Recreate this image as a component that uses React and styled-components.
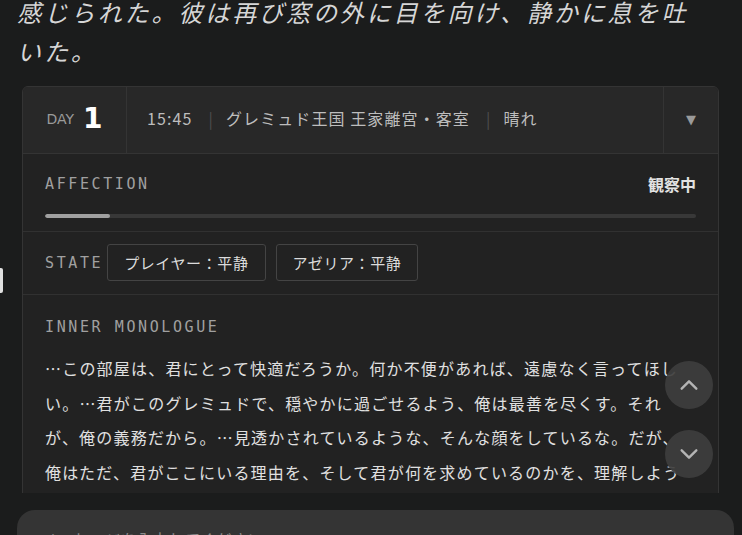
import React from "react"
import styled, { createGlobalStyle } from "styled-components"

const GlobalStyle = createGlobalStyle`
  html, body {
    margin: 0;
    padding: 0;
    background: #1b1c1c;
  }
  * { box-sizing: border-box; }
`

const jp = `"Noto Sans CJK JP", "DejaVu Sans", sans-serif`
const mono = `"DejaVu Sans Mono", "Liberation Mono", monospace`

const Page = styled.div`
  position: relative;
  height: 100vh;
  display: flex;
  flex-direction: column;
  overflow: hidden;
  font-family: ${jp};
`

const ScrollArea = styled.div`
  flex: 1;
  overflow: hidden;
  padding: 0 23px 0 17px;
`

const Story = styled.p`
  margin: -8px 0 16px;
  padding-right: 20px;
  font-size: 24px;
  line-height: 39px;
  letter-spacing: 2.9px;
  font-style: italic;
  color: #d6d6d6;
`

const Card = styled.div`
  margin-left: 5px;
  border: 1px solid #343434;
  border-radius: 6px;
  background: #222222;
  overflow: hidden;
`

const Header = styled.div`
  display: flex;
  height: 67px;
  background: #282828;
  border-bottom: 1px solid #343434;
`

const DayCell = styled.div`
  width: 104px;
  display: flex;
  align-items: center;
  justify-content: center;
  gap: 9px;
  padding-bottom: 3px;
  border-right: 1px solid #343434;
`

const DayLabel = styled.span`
  font-family: "DejaVu Sans", sans-serif;
  font-size: 14px;
  color: #9a9a9a;
`

const DayNum = styled.span`
  font-family: "DejaVu Sans", sans-serif;
  font-weight: 700;
  font-size: 28px;
  color: #ffffff;
`

const InfoCell = styled.div`
  flex: 1;
  display: flex;
  align-items: center;
  padding: 0 0 4px 20px;
  font-size: 16px;
  letter-spacing: 1.1px;
  color: #bdbdbd;
`

const Sep = styled.span`
  color: #4e4e4e;
  margin: 0 12px 0 16px;
`

const ToggleCell = styled.div`
  width: 55px;
  display: flex;
  align-items: center;
  justify-content: center;
  padding-bottom: 2px;
  border-left: 1px solid #343434;
  color: #9a9a9a;
  font-size: 13px;
  font-family: "DejaVu Sans", sans-serif;
`

const Section = styled.div`
  padding: ${(p) => p.pad || "18px 22px 13px"};
  border-bottom: ${(p) => (p.last ? "none" : "1px solid #313131")};
`

const Row = styled.div`
  display: flex;
  align-items: center;
  justify-content: ${(p) => p.justify || "flex-start"};
  gap: 10px;
`

const Label = styled.span`
  display: block;
  font-family: ${mono};
  font-size: 15px;
  line-height: 20px;
  letter-spacing: 2.6px;
  color: #a0a0a0;
  margin-right: ${(p) => p.mr || 0};
`

const Status = styled.span`
  font-size: 16px;
  font-weight: 700;
  color: #e2e2e2;
`

const Track = styled.div`
  margin-top: 18px;
  height: 4px;
  border-radius: 2px;
  background: #383838;
  overflow: hidden;
`

const Fill = styled.div`
  height: 100%;
  background: #a0a0a0;
  border-radius: 2px;
`

const Pill = styled.span`
  height: 37px;
  display: inline-flex;
  align-items: center;
  padding: 0 16px;
  border: 1px solid #444444;
  border-radius: 3px;
  font-size: 15px;
  letter-spacing: 0.6px;
  color: #dcdcdc;
`

const Monologue = styled.p`
  margin: 14px 0 0;
  font-size: 16px;
  line-height: 34.5px;
  letter-spacing: 1.2px;
  color: #e0e0e0;
`

const BottomBar = styled.div`
  height: 42px;
  flex-shrink: 0;
  overflow: hidden;
  padding: 17px 8px 0 17px;
`

const InputBox = styled.div`
  height: 60px;
  border-radius: 18px;
  background: #343434;
  padding: 17px 24px;
  font-size: 16px;
  color: #8a8a8a;
`

const EdgeMark = styled.div`
  position: absolute;
  left: 0;
  top: 268px;
  width: 3px;
  height: 25px;
  background: #e0e0e0;
  border-radius: 0 2px 2px 0;
`

const ScrollButton = styled.button`
  position: absolute;
  right: 29px;
  top: ${(p) => p.top}px;
  width: 48px;
  height: 48px;
  border: none;
  border-radius: 50%;
  background: rgba(62, 62, 62, 0.92);
  display: flex;
  align-items: center;
  justify-content: center;
  padding: 0;
  cursor: pointer;
`

const Chevron = ({ up }) => (
  <svg width="22" height="22" viewBox="0 0 24 24" fill="none" stroke="#b4b4b4" strokeWidth="2.6" strokeLinecap="round" strokeLinejoin="round">
    {up ? <polyline points="4 16 12 8 20 16" /> : <polyline points="4 8 12 16 20 8" />}
  </svg>
)

export default function App() {
  const affection = 10

  return (
    <>
      <GlobalStyle />
      <Page>
        <ScrollArea>
          <Story>感じられた。彼は再び窓の外に目を向け、静かに息を吐いた。</Story>
          <Card>
            <Header>
              <DayCell>
                <DayLabel>DAY</DayLabel>
                <DayNum>1</DayNum>
              </DayCell>
              <InfoCell>
                <span>15:45</span>
                <Sep>|</Sep>
                <span>グレミュド王国 王家離宮・客室</span>
                <Sep>|</Sep>
                <span>晴れ</span>
              </InfoCell>
              <ToggleCell>▼</ToggleCell>
            </Header>

            <Section>
              <Row justify="space-between">
                <Label>AFFECTION</Label>
                <Status>観察中</Status>
              </Row>
              <Track>
                <Fill style={{ width: `${affection}%` }} />
              </Track>
            </Section>

            <Section pad="12px 22px 13px">
              <Row>
                <Label mr="-6px">STATE</Label>
                <Pill>プレイヤー：平静</Pill>
                <Pill>アゼリア：平静</Pill>
              </Row>
            </Section>

            <Section pad="22px 22px 20px" last>
              <Label>INNER MONOLOGUE</Label>
              <Monologue>
                …この部屋は、君にとって快適だろうか。何か不便があれば、遠慮なく言ってほしい。…君がこのグレミュドで、穏やかに過ごせるよう、俺は最善を尽くす。それが、俺の義務だから。…見透かされているような、そんな顔をしているな。だが、俺はただ、君がここにいる理由を、そして君が何を求めているのかを、理解しようとしているだけだ。
              </Monologue>
            </Section>
          </Card>
        </ScrollArea>

        <BottomBar>
          <InputBox>メッセージを入力してください…</InputBox>
        </BottomBar>

        <EdgeMark />
        <ScrollButton top={361} aria-label="Scroll up">
          <Chevron up />
        </ScrollButton>
        <ScrollButton top={430} aria-label="Scroll down">
          <Chevron />
        </ScrollButton>
      </Page>
    </>
  )
}
